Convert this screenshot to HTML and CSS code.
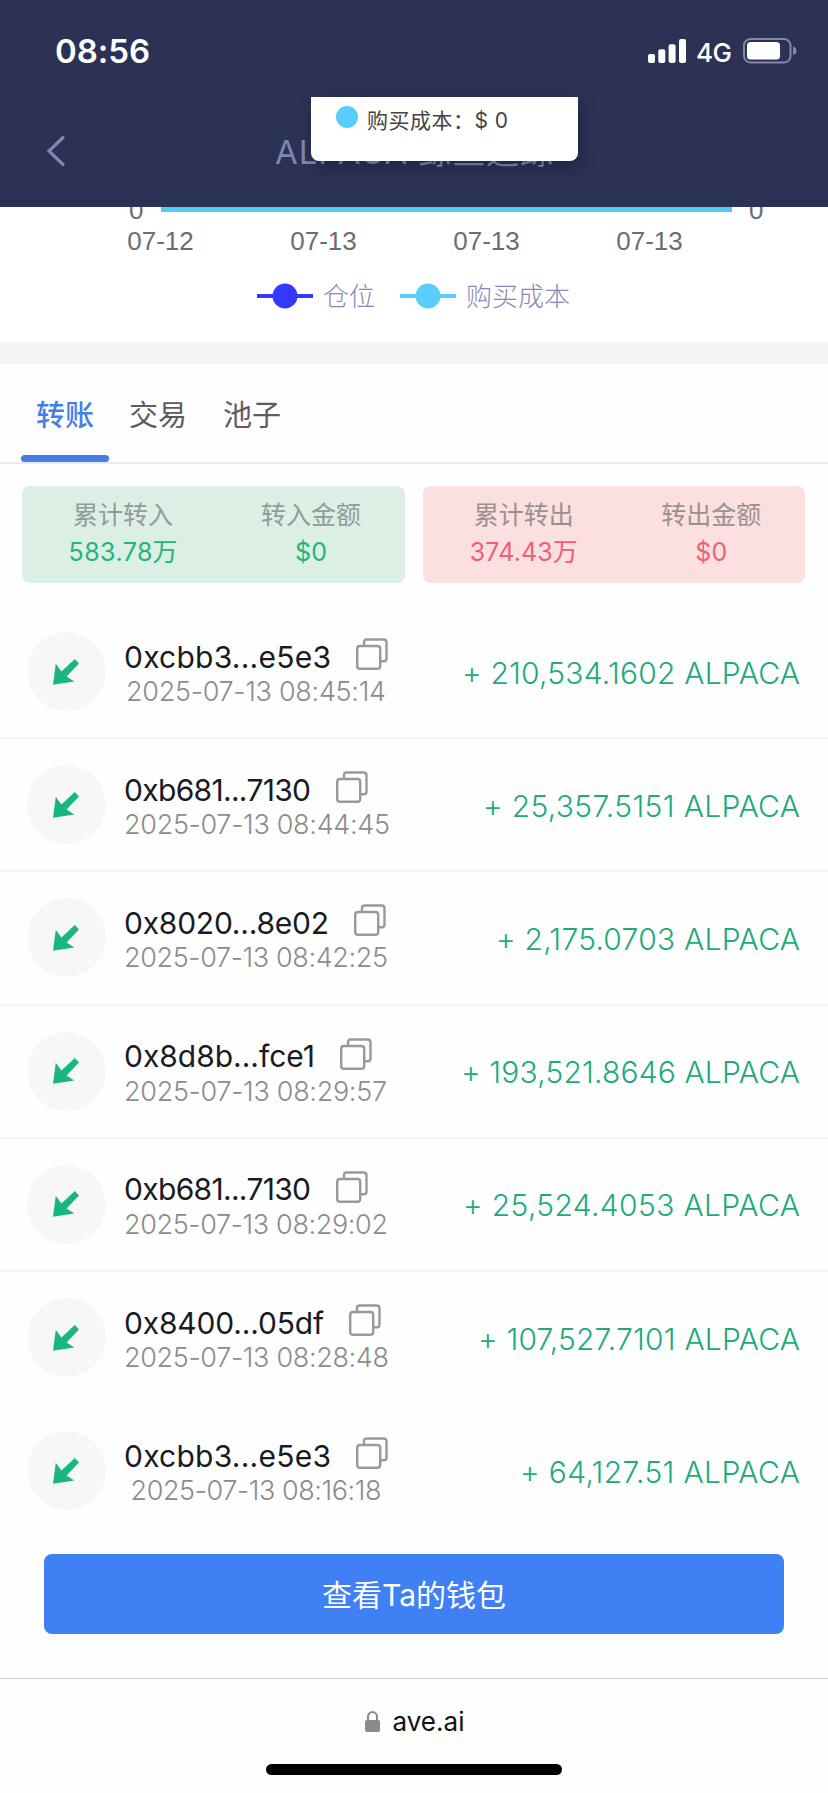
FILE: index.html
```html
<!DOCTYPE html>
<html lang="zh-CN">
<head>
<meta charset="utf-8">
<title>ALPACA</title>
<link rel="stylesheet" href="styles.css">
</head>
<body>
<svg class="defs" aria-hidden="true">
  <symbol id="copy" viewBox="0 0 32 32"><path d="M8 7V4.2Q8 1.5 10.7 1.5H27.8Q30.5 1.5 30.5 4.2V20.5Q30.5 23.2 27.8 23.2H25" /><rect x="1.2" y="8" width="23" height="22.7" rx="2.8" /></symbol>
  <symbol id="arrow" viewBox="0 0 26 26"><path d="M21.8 0L26 4.6L13.6 17.6L21.3 22.4L0 25.8L2.8 4.8L8.4 12.6Z" /></symbol>
</svg>
<header class="header">
  <div class="status">
    <span class="time fit" data-w="95">08:56</span>
    <div class="status-right">
      <svg class="signal" viewBox="0 0 38 24"><rect x="0" y="15" width="7" height="9" rx="2"/><rect x="10.3" y="10.3" width="7" height="13.7" rx="2"/><rect x="20.6" y="5.3" width="7" height="18.7" rx="2"/><rect x="31" y="0" width="7" height="24" rx="2"/></svg>
      <span class="net fit" data-w="36">4G</span>
      <svg class="battery" viewBox="0 0 54 26"><rect class="shell" x="1" y="1" width="46.5" height="23.5" rx="6.5"/><rect class="charge" x="4" y="4" width="33" height="17.5" rx="3.5"/><path class="nub" d="M50 8.5Q53.5 9.5 53.5 12.8Q53.5 16 50 17Z"/></svg>
    </div>
  </div>
  <div class="nav">
    <svg class="back" viewBox="0 0 18 30"><path d="M16 1.5L2 15L16 28.5"/></svg>
    <h1 class="title"><span class="fit" data-w="278">ALPACA 鲸鱼追踪</span></h1>
  </div>
  <div class="tooltip"><i class="dot"></i><span class="fit" data-w="141">购买成本：$ 0</span></div>
</header>
<section class="chart">
  <div class="axis"><span class="zero">0</span><i class="series"></i><span class="zero">0</span></div>
  <div class="dates"><span>07-12</span><span>07-13</span><span>07-13</span><span>07-13</span></div>
  <div class="legend">
    <span class="key blue"><svg viewBox="0 0 56 26"><path d="M0 13H56"/><circle cx="28" cy="13" r="12.5"/></svg><span>仓位</span></span>
    <span class="key sky"><svg viewBox="0 0 56 26"><path d="M0 13H56"/><circle cx="28" cy="13" r="12.5"/></svg><span>购买成本</span></span>
  </div>
</section>
<div class="band"></div>
<nav class="tabs"><span class="tab active">转账</span><span class="tab">交易</span><span class="tab">池子</span></nav>
<section class="summary">
  <div class="card in">
    <div><span class="label">累计转入</span><b><span class="fit" data-w="84">583.78</span>万</b></div>
    <div><span class="label">转入金额</span><b><span class="fit" data-w="32">$0</span></b></div>
  </div>
  <div class="card out">
    <div><span class="label">累计转出</span><b><span class="fit" data-w="83">374.43</span>万</b></div>
    <div><span class="label">转出金额</span><b><span class="fit" data-w="32">$0</span></b></div>
  </div>
</section>
<main class="list">
  <article class="row"><span class="badge"><svg><use href="#arrow"/></svg></span><div class="info"><div class="addr"><span class="fit" data-w="207">0xcbb3...e5e3</span><svg class="copy"><use href="#copy"/></svg></div><time class="fit" data-w="260">2025-07-13 08:45:14</time></div><span class="amount fit" data-w="338">+ 210,534.1602 ALPACA</span></article>
  <article class="row"><span class="badge"><svg><use href="#arrow"/></svg></span><div class="info"><div class="addr"><span class="fit" data-w="187">0xb681...7130</span><svg class="copy"><use href="#copy"/></svg></div><time class="fit" data-w="266">2025-07-13 08:44:45</time></div><span class="amount fit" data-w="317">+ 25,357.5151 ALPACA</span></article>
  <article class="row"><span class="badge"><svg><use href="#arrow"/></svg></span><div class="info"><div class="addr"><span class="fit" data-w="205">0x8020...8e02</span><svg class="copy"><use href="#copy"/></svg></div><time class="fit" data-w="264">2025-07-13 08:42:25</time></div><span class="amount fit" data-w="304">+ 2,175.0703 ALPACA</span></article>
  <article class="row"><span class="badge"><svg><use href="#arrow"/></svg></span><div class="info"><div class="addr"><span class="fit" data-w="191">0x8d8b...fce1</span><svg class="copy"><use href="#copy"/></svg></div><time class="fit" data-w="263">2025-07-13 08:29:57</time></div><span class="amount fit" data-w="339">+ 193,521.8646 ALPACA</span></article>
  <article class="row"><span class="badge"><svg><use href="#arrow"/></svg></span><div class="info"><div class="addr"><span class="fit" data-w="187">0xb681...7130</span><svg class="copy"><use href="#copy"/></svg></div><time class="fit" data-w="264">2025-07-13 08:29:02</time></div><span class="amount fit" data-w="337">+ 25,524.4053 ALPACA</span></article>
  <article class="row plain"><span class="badge"><svg><use href="#arrow"/></svg></span><div class="info"><div class="addr"><span class="fit" data-w="200">0x8400...05df</span><svg class="copy"><use href="#copy"/></svg></div><time class="fit" data-w="265">2025-07-13 08:28:48</time></div><span class="amount fit" data-w="322">+ 107,527.7101 ALPACA</span></article>
  <article class="row plain"><span class="badge"><svg><use href="#arrow"/></svg></span><div class="info"><div class="addr"><span class="fit" data-w="207">0xcbb3...e5e3</span><svg class="copy"><use href="#copy"/></svg></div><time class="fit" data-w="251">2025-07-13 08:16:18</time></div><span class="amount fit" data-w="280">+ 64,127.51 ALPACA</span></article>
</main>
<div class="action"><button class="wallet">查看Ta的钱包</button></div>
<footer class="browser">
  <div class="site"><svg class="lock" viewBox="0 0 15 21"><path class="shackle" d="M3 10V5.8a4.5 4.8 0 0 1 9 0V10"/><rect y="9" width="15" height="12" rx="2"/></svg><span class="fit" data-w="72">ave.ai</span></div>
  <i class="home"></i>
</footer>
<script src="fit.js"></script>
</body>
</html>
```
FILE: styles.css
```css
* { box-sizing: border-box; }
body { margin: 0; width: 828px; height: 1793px; overflow: hidden; display: flex; flex-direction: column; background: #fefefe; color: #191b1f; font-family: Inter, "Noto Sans CJK SC", sans-serif; }
.defs { position: absolute; width: 0; height: 0; }
.fit { white-space: nowrap; }

.header { position: relative; z-index: 1; flex: none; height: 207px; background: #2c3156; }
.status { display: flex; justify-content: space-between; align-items: center; height: 102px; padding: 0 31px 0 55px; color: #fff; }
.time { font-size: 33px; font-weight: 600; }
.status-right { display: flex; align-items: center; }
.signal { width: 38px; height: 24px; fill: #fff; }
.net { margin: 2px 11px 0 10px; font-size: 26px; font-weight: 450; }
.battery { width: 54px; height: 26px; }
.shell { fill: none; stroke: #8487a5; stroke-width: 2; }
.charge { fill: #fff; }
.nub { fill: #8487a5; }
.nav { display: grid; grid-template-columns: 60px 1fr 60px; align-items: center; height: 98px; padding: 0 47px; }
.back { width: 18px; height: 30px; fill: none; stroke: #8386b4; stroke-width: 3.2; stroke-linecap: round; }
.title { margin: 1px 0 0; text-align: center; white-space: nowrap; font-size: 33px; line-height: 40px; font-weight: 400; color: #8084b0; }
.tooltip { position: absolute; left: 311px; top: 97px; width: 267px; height: 64px; display: flex; gap: 9px; padding: 9px 0 0 25px; border-radius: 0 0 8px 8px; background: #fff; color: #444; font-size: 21px; line-height: 29px; box-shadow: 3px 6px 16px rgba(0, 0, 0, .25); }
.dot { width: 22px; height: 22px; border-radius: 50%; background: #58cefd; }

.chart { flex: none; height: 135px; background: #fff; color: #6d6d70; font: 26px/30px "Liberation Sans", sans-serif; }
.axis { display: flex; height: 12px; padding: 0 64px 0 129px; gap: 17px; }
.axis .zero { width: 15px; height: 30px; margin-top: -12px; }
.series { flex: none; width: 571px; height: 5px; background: #55cbf4; }
.dates { display: grid; grid-template-columns: repeat(4, 163px); margin: 7px 0 0 79px; text-align: center; }
.legend { display: flex; gap: 25px; margin: 25px 0 0 257px; color: #8788b8; font: 300 26px/30px "Noto Sans CJK SC", sans-serif; }
.key { display: flex; align-items: center; gap: 11px; height: 30px; }
.key span { margin: -3px 0 0 -1px; }
.key svg { width: 56px; height: 26px; stroke-width: 4; }
.key circle { stroke: none; }
.blue svg { fill: #3538fd; stroke: #3538fd; }
.sky svg { fill: #58cefd; stroke: #58cefd; }
.band { flex: none; height: 22px; background: #f2f6f8; }

.tabs { flex: none; display: flex; gap: 6px; height: 100px; padding-left: 21px; border-bottom: 2px solid #e9eaec; font-size: 29px; }
.tab { display: flex; flex-direction: column; justify-content: space-between; align-items: center; width: 88px; padding: 31px 2px 0 0; line-height: 42px; color: #5c5c5c; }
.tab.active { padding-right: 0; color: #477ee8; font-weight: 500; }
.tab.active::after { content: ""; width: 88px; height: 7px; border-radius: 4px; background: #447ce8; }

.summary { flex: none; display: grid; grid-template-columns: 383px 382px; gap: 18px; height: 142px; padding: 22px 0 23px 22px; }
.card { display: grid; grid-template-columns: 1fr 1fr; padding: 11px 0 0 7px; border-radius: 8px; text-align: center; font-size: 25px; line-height: 37px; }
.card > div { display: flex; flex-direction: column; }
.label { color: #959a98; }
.card b { font-weight: 400; font-size: 25px; }
.in { background: #dbefe5; color: #23b47e; }
.out { background: #fce0e0; color: #ee5f76; }
.out .label { color: #9b9090; }

.list { flex: none; height: 932px; }
.row { display: flex; align-items: center; height: 133.2px; padding: 0 28px 0 27px; border-bottom: 2px solid #f5f5f6; }
.plain { border-color: transparent; }
.badge { flex: none; display: flex; align-items: center; justify-content: center; width: 79px; height: 79px; padding-right: 1px; border-radius: 50%; background: #f7f7f7; }
.badge svg { width: 26px; height: 26px; fill: #19b684; }
.info { display: flex; flex-direction: column; align-items: center; margin: 3px 0 0 18px; }
.addr { align-self: flex-start; display: flex; align-items: center; gap: 25px; height: 37px; font-size: 30px; font-weight: 400; }
.copy { width: 32px; height: 32px; margin-top: -5px; fill: none; stroke: #999; stroke-width: 2.4; }
.row time { line-height: 33px; font-size: 27px; font-weight: 300; color: #8c8c8c; }
.amount { margin: 2px 0 0 auto; font-size: 30px; font-weight: 350; color: #20aa7b; }

.action { flex: none; height: 140px; padding: 16px 44px 44px; }
.wallet { display: block; width: 740px; height: 80px; padding: 0 0 3px; border: 0; border-radius: 8px; background: #3f80f5; color: #fff; font: 400 30px Inter, "Noto Sans CJK SC", sans-serif; }
.browser { flex: 1; display: flex; flex-direction: column; align-items: center; border-top: 1px solid #cfcfd1; background: #fdfdfd; color: #111; }
.site { display: flex; align-items: center; gap: 12px; height: 85px; padding-left: 2px; font-size: 26px; }
.lock { width: 15px; height: 21px; fill: #8a8a8c; }
.shackle { fill: none; stroke: #8a8a8c; stroke-width: 2; }
.home { width: 296px; height: 11px; border-radius: 6px; background: #000; }
```
FILE: fit.js
```js
document.querySelectorAll('.fit').forEach(function (el) {
  var range = document.createRange();
  range.selectNodeContents(el);
  var natural = range.getBoundingClientRect().width;
  var step = (Number(el.dataset.w) - natural) / (el.textContent.length - 1);
  el.style.letterSpacing = step + 'px';
  el.style.marginRight = (parseFloat(getComputedStyle(el).marginRight) - step) + 'px';
});
```
